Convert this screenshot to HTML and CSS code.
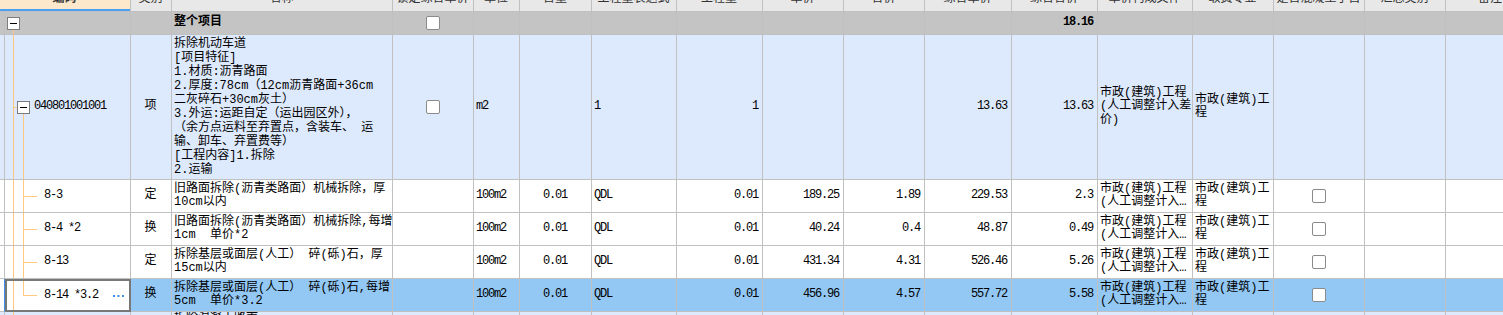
FILE: index.html
```html
<!DOCTYPE html>
<html lang="zh-CN">
<head>
    <meta charset="UTF-8">
    <title>分部分项工程</title>
    <link rel="stylesheet" href="styles.css">
</head>
<body>

<div class="sheet">

    <div class="row head">
        <div class="cell code-head">编码</div>
        <div class="cell">类别</div>
        <div class="cell">名称</div>
        <div class="cell">锁定综合单价</div>
        <div class="cell">单位</div>
        <div class="cell">含量</div>
        <div class="cell">工程量表达式</div>
        <div class="cell">工程量</div>
        <div class="cell">单价</div>
        <div class="cell">合价</div>
        <div class="cell">综合单价</div>
        <div class="cell">综合合价</div>
        <div class="cell">单价构成文件</div>
        <div class="cell">取费专业</div>
        <div class="cell">是否混凝土子目</div>
        <div class="cell">汇总类别</div>
        <div class="cell">备注</div>
    </div>

    <div class="row total">
        <div class="cell gutter"></div>
        <div class="cell tree tree-root">
            <svg class="fold" width="13" height="13"><rect x="0.5" y="0.5" width="12" height="12" fill="#fff" stroke="#7c7c7c"/><path d="M3 6.5h7" stroke="#000"/></svg>
        </div>
        <div class="cell"></div>
        <div class="cell name"><b>整个项目</b></div>
        <div class="cell c"><span class="check"></span></div>
        <div class="cell"></div>
        <div class="cell"></div>
        <div class="cell"></div>
        <div class="cell"></div>
        <div class="cell"></div>
        <div class="cell"></div>
        <div class="cell"></div>
        <div class="cell r n"><b>18.16</b></div>
        <div class="cell"></div>
        <div class="cell"></div>
        <div class="cell"></div>
        <div class="cell"></div>
        <div class="cell"></div>
    </div>

    <div class="row item">
        <div class="cell gutter"></div>
        <div class="cell tree tree-item">
            <svg class="fold" width="13" height="13"><rect x="0.5" y="0.5" width="12" height="12" fill="#fff" stroke="#7c7c7c"/><path d="M3 6.5h7" stroke="#000"/></svg>
            <span class="code">040801001001</span>
        </div>
        <div class="cell c">项</div>
        <div class="cell name tall">拆除机动车道<br>[项目特征]<br>1.材质:沥青路面<br>2.厚度:78cm（12cm沥青路面+36cm<br>二灰碎石+30cm灰土）<br>3.外运:运距自定（运出园区外），<br>（余方点运料至弃置点，含装车、 运<br>输、卸车、弃置费等）<br>[工程内容]1.拆除<br>2.运输</div>
        <div class="cell c"><span class="check"></span></div>
        <div class="cell n">m2</div>
        <div class="cell"></div>
        <div class="cell n">1</div>
        <div class="cell r n">1</div>
        <div class="cell"></div>
        <div class="cell"></div>
        <div class="cell r n">13.63</div>
        <div class="cell r n">13.63</div>
        <div class="cell">市政(建筑)工程<br>(人工调整计入差<br>价)</div>
        <div class="cell">市政(建筑)工<br>程</div>
        <div class="cell"></div>
        <div class="cell"></div>
        <div class="cell"></div>
    </div>

    <div class="row sub">
        <div class="cell gutter"></div>
        <div class="cell tree tree-leaf">8-3</div>
        <div class="cell c">定</div>
        <div class="cell name">旧路面拆除(沥青类路面）机械拆除，厚<br>10cm以内</div>
        <div class="cell"></div>
        <div class="cell n">100m2</div>
        <div class="cell c n">0.01</div>
        <div class="cell n">QDL</div>
        <div class="cell r n">0.01</div>
        <div class="cell r n">189.25</div>
        <div class="cell r n">1.89</div>
        <div class="cell r n">229.53</div>
        <div class="cell r n">2.3</div>
        <div class="cell">市政(建筑)工程<br>(人工调整计入…</div>
        <div class="cell">市政(建筑)工<br>程</div>
        <div class="cell c"><span class="check"></span></div>
        <div class="cell"></div>
        <div class="cell"></div>
    </div>

    <div class="row sub">
        <div class="cell gutter"></div>
        <div class="cell tree tree-leaf">8-4 *2</div>
        <div class="cell c">换</div>
        <div class="cell name">旧路面拆除(沥青类路面）机械拆除,每增<br>1cm&nbsp;&nbsp;单价*2</div>
        <div class="cell"></div>
        <div class="cell n">100m2</div>
        <div class="cell c n">0.01</div>
        <div class="cell n">QDL</div>
        <div class="cell r n">0.01</div>
        <div class="cell r n">40.24</div>
        <div class="cell r n">0.4</div>
        <div class="cell r n">48.87</div>
        <div class="cell r n">0.49</div>
        <div class="cell">市政(建筑)工程<br>(人工调整计入…</div>
        <div class="cell">市政(建筑)工<br>程</div>
        <div class="cell c"><span class="check"></span></div>
        <div class="cell"></div>
        <div class="cell"></div>
    </div>

    <div class="row sub">
        <div class="cell gutter"></div>
        <div class="cell tree tree-leaf">8-13</div>
        <div class="cell c">定</div>
        <div class="cell name">拆除基层或面层(人工） 碎(砾)石，厚<br>15cm以内</div>
        <div class="cell"></div>
        <div class="cell n">100m2</div>
        <div class="cell c n">0.01</div>
        <div class="cell n">QDL</div>
        <div class="cell r n">0.01</div>
        <div class="cell r n">431.34</div>
        <div class="cell r n">4.31</div>
        <div class="cell r n">526.46</div>
        <div class="cell r n">5.26</div>
        <div class="cell">市政(建筑)工程<br>(人工调整计入…</div>
        <div class="cell">市政(建筑)工<br>程</div>
        <div class="cell c"><span class="check"></span></div>
        <div class="cell"></div>
        <div class="cell"></div>
    </div>

    <div class="row sub sel">
        <div class="cell gutter"></div>
        <div class="cell tree tree-last focus">
            <span>8-14 *3.2</span>
            <svg class="more" width="11" height="2"><rect x="0" width="2" height="2"/><rect x="4.5" width="2" height="2"/><rect x="9" width="2" height="2"/></svg>
        </div>
        <div class="cell c">换</div>
        <div class="cell name">拆除基层或面层(人工） 碎(砾)石,每增<br>5cm&nbsp;&nbsp;单价*3.2</div>
        <div class="cell"></div>
        <div class="cell n">100m2</div>
        <div class="cell c n">0.01</div>
        <div class="cell n">QDL</div>
        <div class="cell r n">0.01</div>
        <div class="cell r n">456.96</div>
        <div class="cell r n">4.57</div>
        <div class="cell r n">557.72</div>
        <div class="cell r n">5.58</div>
        <div class="cell">市政(建筑)工程<br>(人工调整计入…</div>
        <div class="cell">市政(建筑)工<br>程</div>
        <div class="cell c"><span class="check"></span></div>
        <div class="cell"></div>
        <div class="cell"></div>
    </div>

    <div class="row item">
        <div class="cell gutter"></div>
        <div class="cell tree tree-next"></div>
        <div class="cell"></div>
        <div class="cell name tall top">拆除混凝土路面<br>[项目特征]</div>
        <div class="cell"></div>
        <div class="cell"></div>
        <div class="cell"></div>
        <div class="cell"></div>
        <div class="cell"></div>
        <div class="cell"></div>
        <div class="cell"></div>
        <div class="cell"></div>
        <div class="cell"></div>
        <div class="cell"></div>
        <div class="cell"></div>
        <div class="cell"></div>
        <div class="cell"></div>
        <div class="cell"></div>
    </div>

</div>

</body>
</html>
```

FILE: styles.css
```css
body {
    margin: 0;
    overflow: hidden;
    background: #fff;
}
.sheet {
    width: 1536px;
    margin-top: -12px; /* header is scrolled half out of view */
    font-family: "Liberation Mono", "Noto Sans CJK SC", monospace;
    font-size: 12px;
    color: #000;
}
.row {
    display: grid;
    grid-template-columns: 5px 126px 41px 221px 81px 46px 72px 85px 86px 81px 81px 87px 86px 95px 81px 91px 81px 90px;
}
.cell {
    box-sizing: border-box;
    display: flex;
    align-items: center;
    padding: 0 3px 0 2px;
    border-right: 1px solid #c0c0c0;
    border-bottom: 1px solid #c0c0c0;
    overflow: hidden;
    white-space: nowrap;
    line-height: 13.5px;
}
.c {
    justify-content: center;
}
.r {
    justify-content: flex-end;
}
.n {
    letter-spacing: -1.2px; /* narrow digits like the original bitmap font */
}
.r.n {
    padding-right: 4px;
}
.top {
    align-items: flex-start;
}
.tall {
    line-height: 14px;
}

/* rows */
.head {
    height: 24px;
    background: #e8e8e8;
}
.head .cell {
    justify-content: center;
    color: #333;
}
.head .code-head {
    grid-column: span 2;
    background: #fde8cb;
    box-shadow: inset 0 -2px #4aa0f4;
    font-weight: bold;
}
.total {
    height: 23px;
    background: #c4c4c4;
}
.item {
    height: 145px;
    background: #dde9fc;
}
.sub {
    height: 33px;
    background: #fff;
}
.sel {
    background: #93c8f5;
}
.gutter {
    padding: 0;
}
.sel .gutter {
    background: #fff;
    border-right-color: #3d8ee8;
}

/* tree column */
.tree {
    --ln: linear-gradient(#ffc880, #ffc880);
    padding: 0;
    letter-spacing: -1.2px;
    background-repeat: no-repeat;
    background-origin: border-box;
}
.tree-root {
    background-image: var(--ln);
    background-position: 8px 100%;
    background-size: 1px 50%;
}
.tree-root .fold {
    margin-left: 2px;
}
.tree-item {
    background-image: var(--ln), var(--ln), var(--ln);
    background-position: 8px 0, 8px 50%, 18px 100%;
    background-size: 1px 100%, 4px 1px, 1px 50%;
}
.tree-item .fold {
    margin-left: 12px;
    margin-right: 4px;
}
.tree-leaf,
.tree-last {
    padding-left: 39px;
    background-image: var(--ln), var(--ln), var(--ln);
    background-position: 8px 0, 18px 0, 18px 50%;
    background-size: 1px 100%, 1px 100%, 14px 1px;
}
.tree-last {
    background-size: 1px 100%, 1px 50%, 14px 1px;
}
.tree-next {
    background-image: var(--ln);
    background-position: 8px 0;
    background-size: 1px 100%;
}
.focus {
    background-color: #fff;
    border: 2px solid #787878;
    padding-left: 37px;
}
.fold {
    flex: none;
}
.more {
    flex: none;
    margin-left: auto;
    margin-right: 5px;
    fill: #3d8ee8;
}

.check {
    box-sizing: border-box;
    width: 14px;
    height: 14px;
    background: #fff;
    border: 1px solid #8a8a8a;
    border-radius: 2px;
}
```
